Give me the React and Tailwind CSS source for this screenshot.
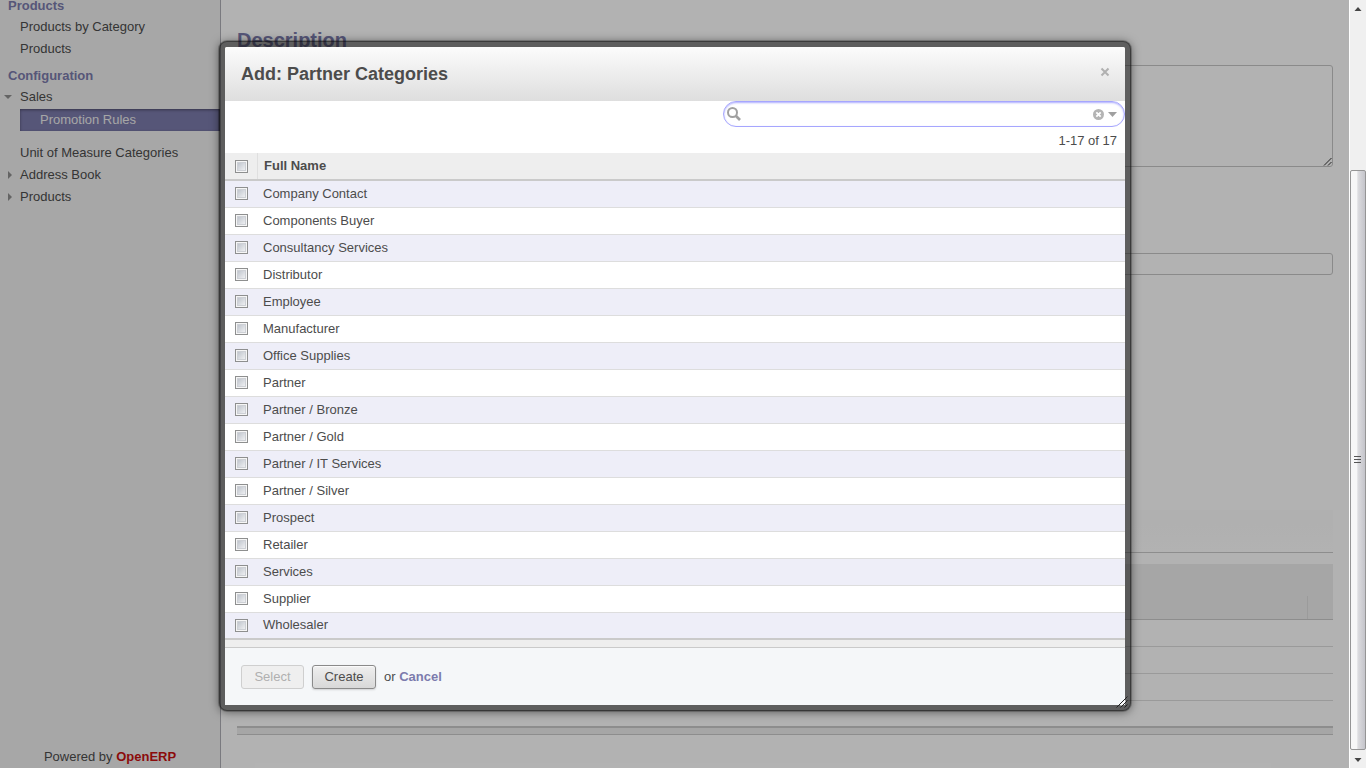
import React from "react";

const CATEGORIES = [
  "Company Contact",
  "Components Buyer",
  "Consultancy Services",
  "Distributor",
  "Employee",
  "Manufacturer",
  "Office Supplies",
  "Partner",
  "Partner / Bronze",
  "Partner / Gold",
  "Partner / IT Services",
  "Partner / Silver",
  "Prospect",
  "Retailer",
  "Services",
  "Supplier",
  "Wholesaler",
];

function Checkbox({ label }) {
  return (
    <input
      type="checkbox"
      aria-label={label}
      className="block size-[13px] appearance-none border border-[#8e8f8f] bg-linear-to-br from-[#b4bac4] to-[#fcfcfc] shadow-[inset_0_0_0_1px_#f6f6f6,inset_0_0_0_2px_#cdd0d5] checked:bg-[#7c7bad]"
    />
  );
}

function Caret({ open }) {
  return (
    <svg className="w-2 shrink-0" viewBox="0 0 8 8" height="8" fill="#909090" aria-hidden="true">
      {open ? <path d="M0 2h8L4 6z" /> : <path d="M4 0v8l4-4z" />}
    </svg>
  );
}

function MenuItem({ children, open, expandable }) {
  return (
    <li>
      <a href="#" className="flex h-[22px] items-center">
        <span className="flex w-5 pl-1">{expandable && <Caret open={open} />}</span>
        {children}
      </a>
    </li>
  );
}

function Sidebar() {
  return (
    <aside className="flex w-[221px] shrink-0 flex-col border-r border-[#afafb6] bg-[#f0f0f0]">
      <nav className="flex-1">
        <h2 className="h-4 pl-2 leading-[11px] font-bold text-[#7c7bad]">Products</h2>
        <ul>
          <MenuItem>Products by Category</MenuItem>
          <MenuItem>Products</MenuItem>
        </ul>
        <h2 className="h-[22px] pl-2 leading-8 font-bold text-[#7c7bad]">Configuration</h2>
        <ul className="pt-1">
          <MenuItem expandable open>Sales</MenuItem>
          <li className="pt-px pb-[11px] pl-5">
            <a
              href="#"
              className="flex h-[22px] items-center bg-[#7c7bad] pl-5 text-[#eeeeee] shadow-[inset_0_1px_3px_rgba(0,0,0,0.4)]"
            >
              Promotion Rules
            </a>
          </li>
          <MenuItem>Unit of Measure Categories</MenuItem>
          <MenuItem expandable>Address Book</MenuItem>
          <MenuItem expandable>Products</MenuItem>
        </ul>
      </nav>
      <p className="pb-[3px] text-center leading-4">
        Powered by{" "}
        <a href="#" className="font-bold text-[#c81010]">
          OpenERP
        </a>
      </p>
    </aside>
  );
}

function Grip({ className, color }) {
  return (
    <svg className={className} width="9" height="9" viewBox="0 0 9 9" stroke={color} aria-hidden="true">
      <path d="M1 8.500L8.500 1M5 8.500L8.500 5" />
    </svg>
  );
}

function PageForm() {
  return (
    <main className="min-w-0 flex-1 bg-white px-4 pt-7">
      <h2 className="h-[37px] text-xl leading-6 font-bold text-[#7c7bad]">Description</h2>
      <div className="relative">
        <textarea
          aria-label="Description"
          className="block h-[102px] w-full resize-none rounded-[3px] border border-[#c6c6c6]"
        />
        <Grip className="absolute right-px bottom-px" color="#333" />
      </div>
      <input
        type="text"
        aria-label="Condition"
        className="mt-[86px] block h-[22px] w-full rounded-[3px] border border-[#c6c6c6]"
      />
      <div className="mt-[235px] h-[43px] border-b border-[#cacaca] bg-linear-to-b from-[#fcfcfc] to-white" />
      <table className="mt-[11px] w-full border-collapse">
        <thead>
          <tr className="h-[55px] border-b border-[#cacaca] bg-[#eeeeee]">
            <th />
            <th className="w-[26px] p-0 align-bottom">
              <div className="h-[23px] border-l border-[#dfdfdf]" />
            </th>
          </tr>
        </thead>
        <tbody>
          {[1, 2, 3].map((n) => (
            <tr key={n} className="h-[27px] border-b border-[#dddddd]">
              <td colSpan={2} />
            </tr>
          ))}
          <tr className="h-[27px] border-b-2 border-[#cacaca]">
            <td colSpan={2} />
          </tr>
        </tbody>
        <tfoot>
          <tr className="h-[7px] border-b border-[#cacaca] bg-[#eeeeee]">
            <td colSpan={2} className="p-0" />
          </tr>
        </tfoot>
      </table>
    </main>
  );
}

function SearchBox() {
  return (
    <div className="ml-auto flex h-[26px] w-[402px] items-center rounded-full border border-[#a6a6fe] bg-white pr-[7px] pl-[3px] shadow-[inset_0_1px_2px_rgba(166,166,254,0.9)]">
      <svg width="14" height="14" viewBox="0 0 14 14" fill="none" stroke="#a0a0a0" aria-hidden="true">
        <circle cx="5.500" cy="5.500" r="4.500" strokeWidth="2" />
        <path d="M9 9l4 4" strokeWidth="2.600" />
      </svg>
      <input type="text" aria-label="Search" className="min-w-0 flex-1 bg-transparent px-2 outline-none" />
      <button type="button" aria-label="Clear">
        <svg width="11" height="11" viewBox="0 0 11 11" aria-hidden="true">
          <circle cx="5.500" cy="5.500" r="5.500" fill="#b4b4b4" />
          <path d="M3.300 3.300l4.400 4.400M7.700 3.300L3.300 7.700" stroke="#fff" strokeWidth="1.800" />
        </svg>
      </button>
      <button type="button" aria-label="Advanced search" className="ml-1">
        <svg width="9" height="5" viewBox="0 0 9 5" fill="#a0a0a0" aria-hidden="true">
          <path d="M0 0h9L4.500 5z" />
        </svg>
      </button>
    </div>
  );
}

function CategoryTable() {
  return (
    <table className="w-full border-collapse">
      <thead>
        <tr className="h-[27px] border-b-2 border-[#cacaca] bg-[#eeeeee]">
          <th className="w-8 p-0 pl-[10px]">
            <Checkbox label="Select all" />
          </th>
          <th className="p-0 text-left">
            <div className="flex h-[26px] items-center border-l border-[#dfdfdf] pl-[6px]">Full Name</div>
          </th>
        </tr>
      </thead>
      <tbody>
        {CATEGORIES.map((name) => (
          <tr
            key={name}
            className="h-[27px] border-b border-[#dddddd] odd:bg-[#eeeef8] last:border-b-2 last:border-[#cacaca]"
          >
            <td className="p-0 pl-[10px]">
              <Checkbox label={name} />
            </td>
            <td className="p-0 pl-[6px] leading-4">{name}</td>
          </tr>
        ))}
      </tbody>
      <tfoot>
        <tr className="h-2 border-b border-[#cacaca] bg-[#eeeeee]">
          <td colSpan={2} className="p-0" />
        </tr>
      </tfoot>
    </table>
  );
}

function Dialog() {
  return (
    <section
      role="dialog"
      aria-labelledby="dialog-title"
      className="relative w-full max-w-[912px] rounded-lg border-6 border-[rgba(17,17,17,0.520)] bg-white bg-clip-padding shadow-[0_0_0_1px_rgba(0,0,0,0.2),0_1px_10px_rgba(0,0,0,0.5)]"
    >
      <header className="flex h-[54px] items-center justify-between rounded-t-[2px] bg-linear-to-b from-[#fcfcfc] to-[#dedede] pr-[15px] pl-4">
        <h1 id="dialog-title" className="text-lg font-bold">
          Add: Partner Categories
        </h1>
        <button type="button" aria-label="Close" className="pb-1">
          <svg width="10" height="10" viewBox="0 0 10 10" stroke="#b0b0b0" strokeWidth="2" aria-hidden="true">
            <path d="M1.500 1.500l7 7M8.500 1.500l-7 7" />
          </svg>
        </button>
      </header>
      <SearchBox />
      <p className="h-[26px] pr-2 text-right leading-[27px]">1-17 of 17</p>
      <CategoryTable />
      <footer className="flex h-[57px] items-center bg-[#f5f7f9] px-4 pt-[2px]">
        <button
          type="button"
          disabled
          className="h-6 w-[63px] rounded-[3px] border border-[#cfcfcf] bg-[#efefef] text-[#b0b0b0]"
        >
          Select
        </button>
        <button
          type="button"
          className="ml-2 h-6 w-16 rounded-[3px] border border-[#8a8a8a] bg-linear-to-b from-[#efefef] to-[#d8d8d8] shadow-[0_1px_2px_rgba(0,0,0,0.15),inset_0_1px_1px_rgba(255,255,255,0.8)]"
        >
          Create
        </button>
        <span className="ml-2">
          or{" "}
          <a href="#" className="font-bold text-[#7c7bad]">
            Cancel
          </a>
        </span>
      </footer>
      <svg className="absolute -right-[3px] -bottom-[3px]" width="12" height="12" viewBox="0 0 12 12" aria-hidden="true">
        <path d="M4 9.500L9.500 4v3L7 9.500z" fill="#fff" />
        <path d="M.5 11.500l11-11M4.500 11.500l7-7M8.500 11.500l3-3" stroke="#222" />
      </svg>
    </section>
  );
}

function ScrollBar() {
  return (
    <div className="flex w-[17px] shrink-0 flex-col border-l border-white bg-[#f0f0f0]" aria-hidden="true">
      <svg width="16" height="17" viewBox="0 0 16 17" fill="#444">
        <path d="M4.500 11h7L8 7z" />
      </svg>
      <div className="flex-[153]" />
      <div className="flex flex-[580] items-center justify-center rounded-[2px] border border-[#959595] bg-linear-to-r from-[#f7f7f7] from-40% via-[#dcdcdf] via-50% to-[#c4c4ca]">
        <svg width="8" height="8" viewBox="0 0 8 8" stroke="#555">
          <path d="M0 .5h7M0 3.500h7M0 6.500h7" />
        </svg>
      </div>
      <svg width="16" height="18" viewBox="0 0 16 18" fill="#444">
        <path d="M4.500 8h7L8 12z" />
      </svg>
    </div>
  );
}

export default function App() {
  return (
    <div className="flex min-h-screen font-['Liberation_Sans',Arial,sans-serif] text-[13px] text-[#4c4c4c]">
      <div className="relative flex min-w-0 flex-1">
        <Sidebar />
        <PageForm />
        <div className="absolute inset-0 flex items-start justify-center bg-black/30 pt-[41px] pl-px">
          <Dialog />
        </div>
      </div>
      <ScrollBar />
    </div>
  );
}
